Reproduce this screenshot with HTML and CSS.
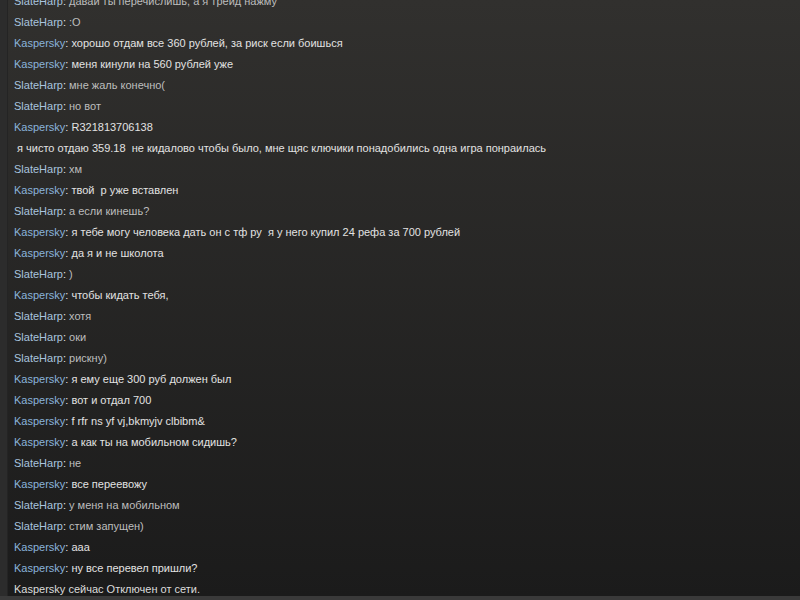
FILE: index.html
```html
<!DOCTYPE html>
<html>
<head>
  <meta charset="utf-8">
  <title>Chat</title>
  <link rel="stylesheet" href="styles.css">
</head>
<body>
<div class="window">
  <div class="log">
    <div class="lines">
      <p><span class="me">SlateHarp</span>: <span class="mine">давай ты перечислишь, а я трейд нажму</span></p>
      <p><span class="me">SlateHarp</span>: <span class="mine">:O</span></p>
      <p><span class="him">Kaspersky</span>: хорошо отдам все 360 рублей, за риск если боишься</p>
      <p><span class="him">Kaspersky</span>: меня кинули на 560 рублей уже</p>
      <p><span class="me">SlateHarp</span>: <span class="mine">мне жаль конечно(</span></p>
      <p><span class="me">SlateHarp</span>: <span class="mine">но вот</span></p>
      <p><span class="him">Kaspersky</span>: R321813706138</p>
      <p>&nbsp;я чисто отдаю 359.18&nbsp; не кидалово чтобы было, мне щяс ключики понадобились одна игра понраилась</p>
      <p><span class="me">SlateHarp</span>: <span class="mine">хм</span></p>
      <p><span class="him">Kaspersky</span>: твой&nbsp; р уже вставлен</p>
      <p><span class="me">SlateHarp</span>: <span class="mine">а если кинешь?</span></p>
      <p><span class="him">Kaspersky</span>: я тебе могу человека дать он с тф ру&nbsp; я у него купил 24 рефа за 700 рублей</p>
      <p><span class="him">Kaspersky</span>: да я и не школота</p>
      <p><span class="me">SlateHarp</span>: <span class="mine">)</span></p>
      <p><span class="him">Kaspersky</span>: чтобы кидать тебя,</p>
      <p><span class="me">SlateHarp</span>: <span class="mine">хотя</span></p>
      <p><span class="me">SlateHarp</span>: <span class="mine">оки</span></p>
      <p><span class="me">SlateHarp</span>: <span class="mine">рискну)</span></p>
      <p><span class="him">Kaspersky</span>: я ему еще 300 руб должен был</p>
      <p><span class="him">Kaspersky</span>: вот и отдал 700</p>
      <p><span class="him">Kaspersky</span>: f rfr ns yf vj,bkmyjv clbibm&amp;</p>
      <p><span class="him">Kaspersky</span>: а как ты на мобильном сидишь?</p>
      <p><span class="me">SlateHarp</span>: <span class="mine">не</span></p>
      <p><span class="him">Kaspersky</span>: все переевожу</p>
      <p><span class="me">SlateHarp</span>: <span class="mine">у меня на мобильном</span></p>
      <p><span class="me">SlateHarp</span>: <span class="mine">стим запущен)</span></p>
      <p><span class="him">Kaspersky</span>: ааа</p>
      <p><span class="him">Kaspersky</span>: ну все перевел пришли?</p>
      <p class="status">Kaspersky сейчас Отключен от сети.</p>
    </div>
  </div>
  <div class="footer"></div>
</div>
</body>
</html>
```

FILE: styles.css
```css
* {
  margin: 0;
  padding: 0;
}

body {
  background-color: #2c2c2c;
  font-family: "Liberation Sans", Arial, sans-serif;
  font-size: 11px;
  color: #e2e2e2;
}

.window {
  height: 600px;
  display: flex;
  flex-direction: column;
  overflow: hidden;
}

.log {
  height: 596px;
  margin-left: 7px;
  border-left: 1px solid #242424;
  background: linear-gradient(#31302e, #1b1b1b);
  overflow: hidden;
}

.lines {
  margin-top: -9px;
  padding-left: 6px;
}

.lines p {
  line-height: 21px;
  white-space: nowrap;
}

.me {
  color: #a8c3df;
}

.him {
  color: #8ab3db;
}

.mine {
  color: #bdbdbd;
}

.status {
  color: #dcdcdc;
}

.footer {
  height: 4px;
  background-color: #3a3a3a;
}
```
